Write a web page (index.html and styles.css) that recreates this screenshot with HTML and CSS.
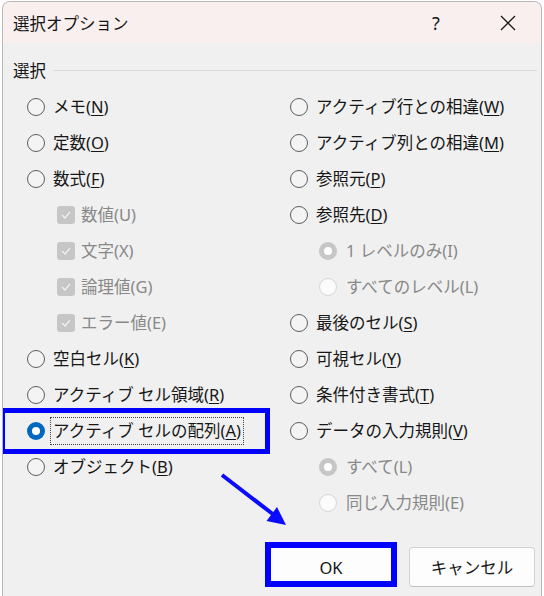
FILE: index.html
```html
<!DOCTYPE html>
<html lang="ja">
<head>
<meta charset="utf-8">
<title>選択オプション</title>
<link rel="stylesheet" href="styles.css">
</head>
<body>
<div class="dialog">
  <div class="titlebar">
    <span class="title">選択オプション</span>
    <span class="help">?</span>
    <span class="close"><svg width="16" height="16" viewBox="0 0 16 16"><path d="M1 1 L15 15 M15 1 L1 15" stroke="#1a1a1a" stroke-width="1.3" fill="none"/></svg></span>
  </div>
  <div class="group-label"><span>選択</span><span class="rule"></span></div>
  <div class="columns">
    <div class="col col-left">
      <div class="opt"><span class="radio"></span><span class="lbl">メモ(<u>N</u>)</span></div>
      <div class="opt"><span class="radio"></span><span class="lbl">定数(<u>O</u>)</span></div>
      <div class="opt"><span class="radio"></span><span class="lbl">数式(<u>F</u>)</span></div>
      <div class="opt sub disabled"><span class="check"><svg width="10" height="8" viewBox="0 0 10 8"><path d="M1 4 L4 7 L9 1" stroke="#f2f2f2" stroke-width="1.2" fill="none"/></svg></span><span class="lbl">数値(U)</span></div>
      <div class="opt sub disabled"><span class="check"><svg width="10" height="8" viewBox="0 0 10 8"><path d="M1 4 L4 7 L9 1" stroke="#f2f2f2" stroke-width="1.2" fill="none"/></svg></span><span class="lbl">文字(X)</span></div>
      <div class="opt sub disabled"><span class="check"><svg width="10" height="8" viewBox="0 0 10 8"><path d="M1 4 L4 7 L9 1" stroke="#f2f2f2" stroke-width="1.2" fill="none"/></svg></span><span class="lbl">論理値(G)</span></div>
      <div class="opt sub disabled"><span class="check"><svg width="10" height="8" viewBox="0 0 10 8"><path d="M1 4 L4 7 L9 1" stroke="#f2f2f2" stroke-width="1.2" fill="none"/></svg></span><span class="lbl">エラー値(E)</span></div>
      <div class="opt"><span class="radio"></span><span class="lbl">空白セル(<u>K</u>)</span></div>
      <div class="opt"><span class="radio"></span><span class="lbl">アクティブ セル領域(<u>R</u>)</span></div>
      <div class="opt marked"><span class="radio on"></span><span class="lbl focus">アクティブ セルの配列(<u>A</u>)</span></div>
      <div class="opt"><span class="radio"></span><span class="lbl">オブジェクト(<u>B</u>)</span></div>
    </div>
    <div class="col col-right">
      <div class="opt"><span class="radio"></span><span class="lbl">アクティブ行との相違(<u>W</u>)</span></div>
      <div class="opt"><span class="radio"></span><span class="lbl">アクティブ列との相違(<u>M</u>)</span></div>
      <div class="opt"><span class="radio"></span><span class="lbl">参照元(<u>P</u>)</span></div>
      <div class="opt"><span class="radio"></span><span class="lbl">参照先(<u>D</u>)</span></div>
      <div class="opt sub disabled"><span class="radio dis-on"></span><span class="lbl">1 レベルのみ(I)</span></div>
      <div class="opt sub disabled"><span class="radio dis-off"></span><span class="lbl">すべてのレベル(L)</span></div>
      <div class="opt"><span class="radio"></span><span class="lbl">最後のセル(<u>S</u>)</span></div>
      <div class="opt"><span class="radio"></span><span class="lbl">可視セル(<u>Y</u>)</span></div>
      <div class="opt"><span class="radio"></span><span class="lbl">条件付き書式(<u>T</u>)</span></div>
      <div class="opt"><span class="radio"></span><span class="lbl">データの入力規則(<u>V</u>)</span></div>
      <div class="opt sub disabled"><span class="radio dis-on"></span><span class="lbl">すべて(L)</span></div>
      <div class="opt sub disabled"><span class="radio dis-off"></span><span class="lbl">同じ入力規則(E)</span></div>
    </div>
  </div>
  <div class="buttons">
    <div class="btn-wrap"><button class="btn">OK</button><span class="mark-box"></span></div>
    <button class="btn">キャンセル</button>
  </div>
  <svg class="arrow" width="80" height="65" viewBox="0 0 80 65">
    <line x1="6" y1="7" x2="58" y2="47" stroke="#0a0aff" stroke-width="4" stroke-linecap="butt"/>
    <polygon points="70,57 50.5,53 61,39" fill="#0a0aff"/>
  </svg>
</div>
</body>
</html>
```
FILE: styles.css
```css
html, body {
  margin: 0;
  padding: 0;
  background: #ffffff;
}

body {
  font-family: "Noto Sans", "Noto Sans CJK JP", sans-serif;
  font-size: 16.5px;
  color: #161616;
}

.dialog {
  position: relative;
  box-sizing: border-box;
  margin: 1px 0 0 2px;
  width: 540px;
  height: 595px;
  border: 1px solid #b9b9b9;
  border-bottom: none;
  border-radius: 8px 8px 0 0;
  background: #f0f0f0;
  overflow: hidden;
}

.titlebar {
  display: flex;
  align-items: center;
  height: 41px;
  background: #f9efef;
  padding-left: 10px;
}

.title {
  flex: 1;
  font-family: "Noto Sans CJK JP", sans-serif;
  font-size: 16.5px;
}

.help {
  width: 46px;
  text-align: center;
  font-family: "Noto Sans", sans-serif;
  font-size: 18px;
  margin-right: 26px;
}

.close {
  width: 46px;
  margin-right: 10px;
  display: flex;
  justify-content: center;
  align-items: center;
}

.close svg {
  display: block;
}

.group-label {
  display: flex;
  align-items: center;
  height: 26px;
  margin-top: 14px;
  padding-left: 10px;
  padding-right: 4px;
  font-family: "Noto Sans CJK JP", sans-serif;
}

.group-label .rule {
  flex: 1;
  height: 1px;
  background: #d9d9d9;
  margin-left: 7px;
}

.columns {
  display: grid;
  grid-template-columns: 287px 1fr;
  margin-top: 6px;
}

.col-left .opt {
  padding-left: 24px;
}

.col-right .opt {
  padding-left: 0;
}

.opt {
  position: relative;
  display: flex;
  align-items: center;
  height: 36px;
  gap: 8px;
}

.opt.sub {
  margin-left: 30px;
  gap: 6px;
}

.col-right .opt.sub {
  margin-left: 29px;
  gap: 9px;
}

.lbl {
  line-height: 24px;
  white-space: nowrap;
}

.lbl u {
  text-decoration-thickness: 1px;
  text-underline-offset: 2px;
}

.disabled .lbl {
  color: #888888;
}

.radio {
  box-sizing: border-box;
  width: 18px;
  height: 18px;
  border-radius: 50%;
  border: 1px solid #5e5e5e;
  background: #f4f4f4;
  flex: none;
  position: relative;
}

.radio.on {
  border: none;
  background: #0067c0;
}

.radio.on::after,
.radio.dis-on::after {
  content: "";
  position: absolute;
  left: 5px;
  top: 5px;
  width: 8px;
  height: 8px;
  border-radius: 50%;
  background: #ffffff;
}

.radio.dis-on {
  border: none;
  background: #c6c6c6;
}

.radio.dis-off {
  border: 1px solid #d6d6d6;
  background: #fbfbfb;
}

.check {
  box-sizing: border-box;
  width: 18px;
  height: 18px;
  border-radius: 3px;
  background: #c6c6c6;
  flex: none;
  display: flex;
  align-items: center;
  justify-content: center;
}

.check svg {
  display: block;
}

.marked::after {
  content: "";
  position: absolute;
  box-sizing: border-box;
  left: -3px;
  top: -5px;
  width: 270px;
  height: 46px;
  border: 5px solid #0000ff;
  pointer-events: none;
}

.focus {
  outline: 1px dotted #444;
  padding: 1px 2px;
  margin-left: -2px;
}

.buttons {
  display: flex;
  justify-content: flex-end;
  gap: 15px;
  margin-top: 26px;
  padding-right: 6px;
}

.btn-wrap {
  position: relative;
}

.btn {
  box-sizing: border-box;
  width: 126px;
  height: 40px;
  border: 1px solid #d3d3d3;
  border-bottom-color: #c0c0c0;
  border-radius: 4px;
  background: #fdfdfd;
  font-family: "Noto Sans", "Noto Sans CJK JP", sans-serif;
  font-size: 16.5px;
  color: #161616;
  padding: 0;
  display: block;
}

.mark-box {
  position: absolute;
  box-sizing: border-box;
  left: -3px;
  right: -3px;
  top: -5px;
  bottom: 0;
  border: 6px solid #0000ff;
}

.arrow {
  position: absolute;
  left: 213px;
  top: 466px;
}
```
